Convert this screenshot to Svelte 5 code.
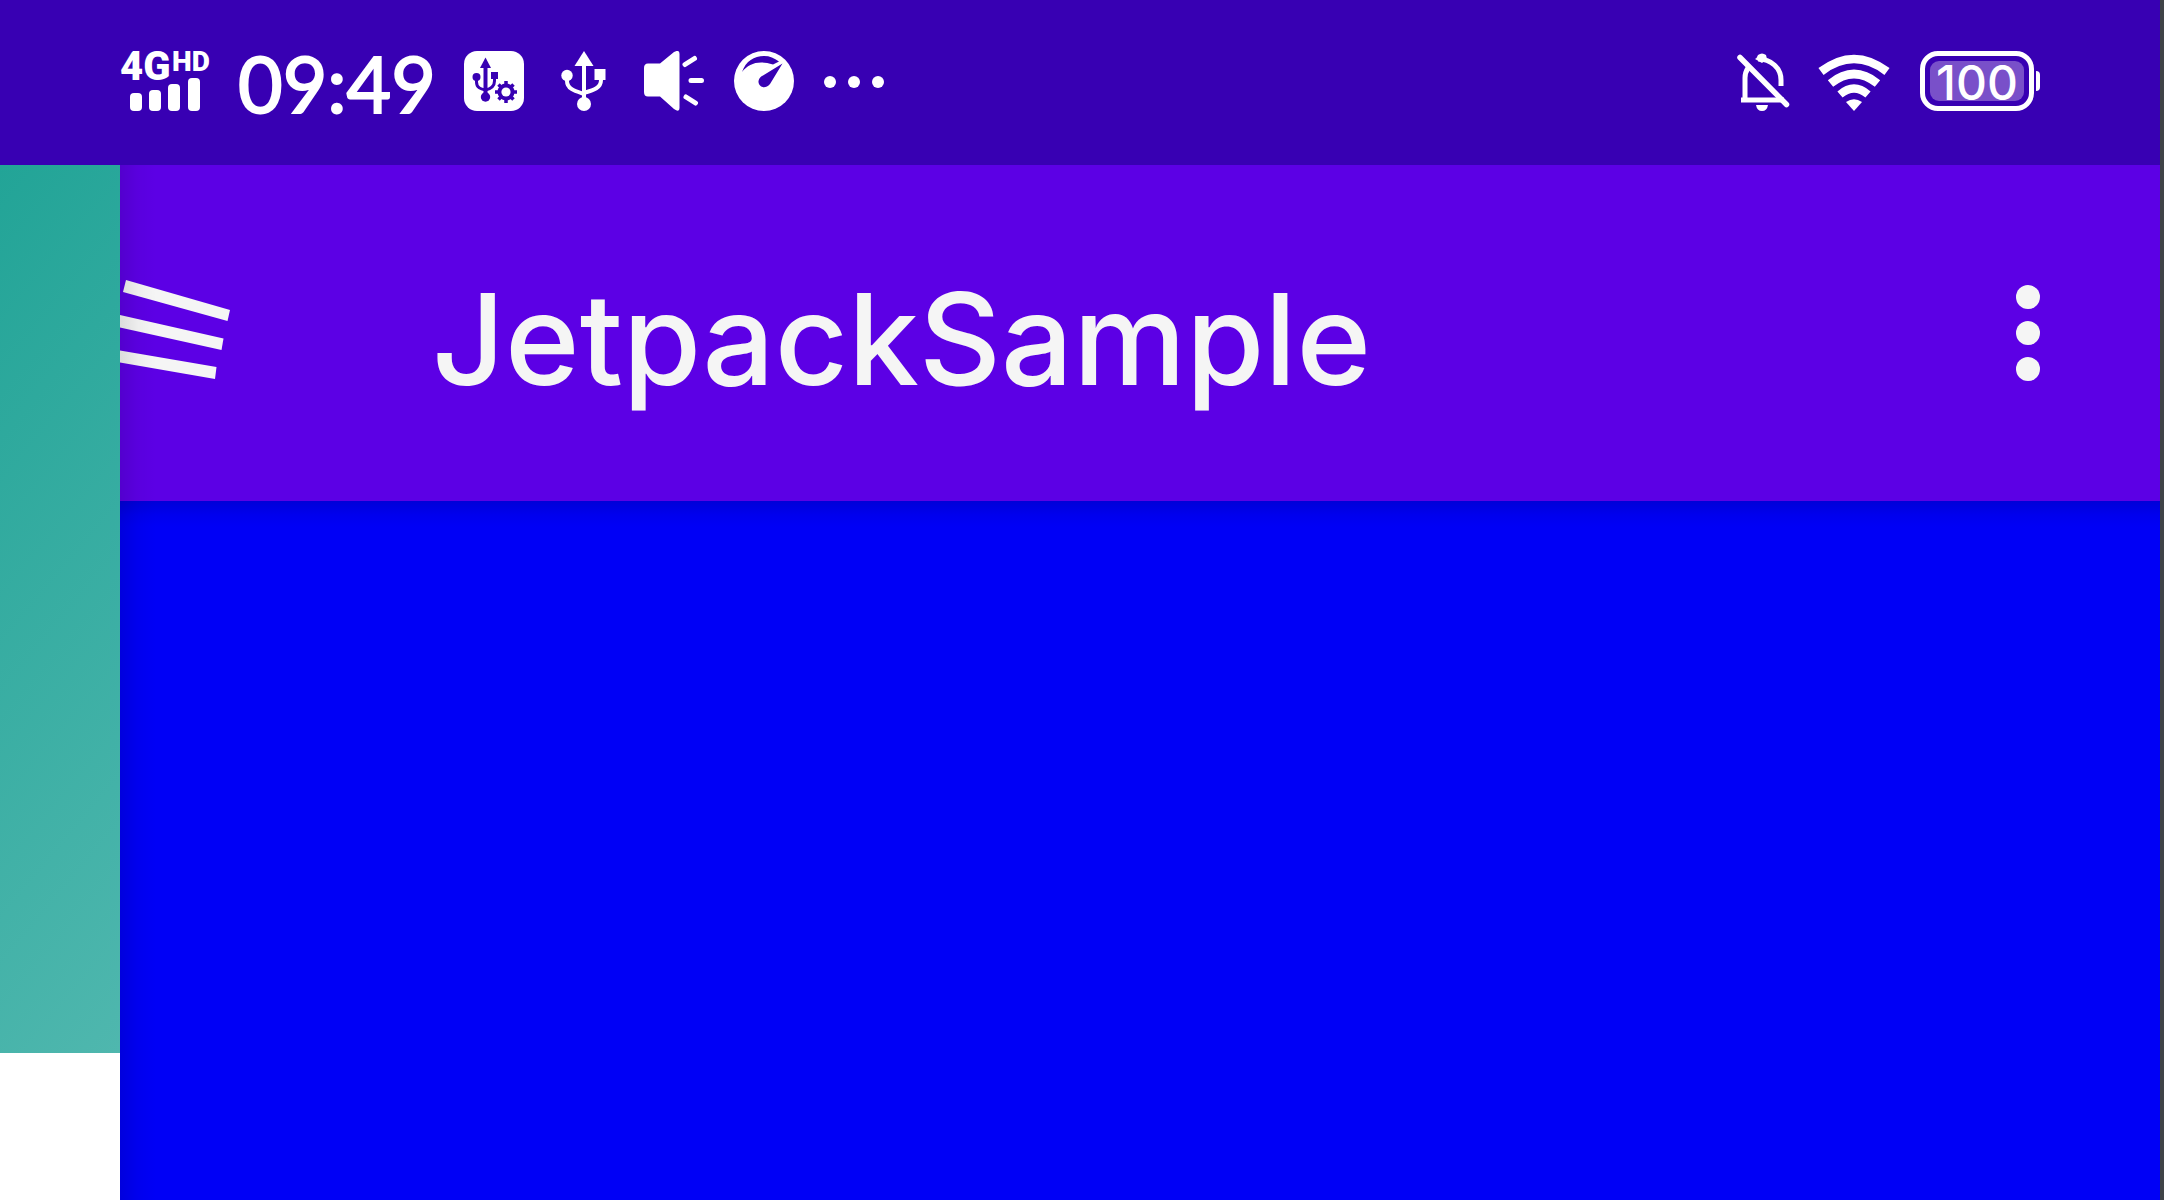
<script>
  const title = 'JetpackSample';
  const time = '09:49';
  const battery = 100;
</script>

<div class="screen">
  <header class="status">
    <div class="signal">
      <div class="network"><span class="gen">4G</span><span class="hd">HD</span></div>
      <svg class="bars" viewBox="0 0 70 33" aria-hidden="true">
        <rect x="0" y="15" width="12" height="18" rx="4" />
        <rect x="19" y="12" width="12" height="21" rx="4" />
        <rect x="38" y="6" width="12" height="27" rx="4" />
        <rect x="58" y="0" width="12" height="33" rx="4" />
      </svg>
    </div>
    <time class="clock">{time}</time>
    <div class="icons">
      <svg viewBox="0 0 60 60" aria-hidden="true">
        <rect width="60" height="60" rx="13" fill="#fff" />
        <g fill="none" stroke="#3800b3" stroke-width="4">
          <path d="M21.500 12V46" />
          <path d="M12.500 27V31C12.500 37 17 38 21.500 39C26 38 30.500 36 30.500 30V24" stroke-width="3" />
        </g>
        <g fill="#3800b3">
          <path d="M21.500 6.500L27 17H16Z" />
          <circle cx="12.500" cy="26" r="4" />
          <rect x="27" y="21" width="7" height="7" />
          <circle cx="21.500" cy="46" r="4.700" />
        </g>
        <circle cx="42" cy="41" r="8.500" fill="#3800b3" />
        <path d="M42 30V52M31 41H53M34.500 33.500L49.500 48.500M49.500 33.500L34.500 48.500" stroke="#3800b3" stroke-width="3.500" />
        <circle cx="42" cy="41" r="4.600" fill="#fff" />
      </svg>
      <svg viewBox="0 0 60 60" aria-hidden="true">
        <path d="M30 10V54M13 24V30C13 38 21 40 30 43M47 24V29C47 37 40 39 30 42" fill="none" stroke="#fff" stroke-width="4" />
        <path d="M30 0L39.500 15H20.500Z" fill="#fff" />
        <circle cx="13" cy="24.500" r="5.700" fill="#fff" />
        <rect x="40.500" y="18" width="11" height="11" fill="#fff" />
        <circle cx="30" cy="53" r="7" fill="#fff" />
      </svg>
      <svg viewBox="0 0 60 60" aria-hidden="true">
        <path d="M4 12.500H16L30 1Q35.500 -2 35.500 3V57Q35.500 62 30 58L16 45.500H4Q0 45.500 0 41V17Q0 12.500 4 12.500Z" fill="#fff" />
        <path d="M41 13.500L50.500 7.500M47 29.500H57.500M42 46L51.500 52" stroke="#fff" stroke-width="5" stroke-linecap="round" />
      </svg>
      <svg viewBox="0 0 60 60" aria-hidden="true">
        <circle cx="30" cy="30" r="30" fill="#fff" />
        <path d="M8 21C12 10 20 5 30 5C36 5 40 7 45 10.500L39 13.500C25 9 15 12 8 21Z" fill="#3800b3" />
        <path d="M48.500 12.500L36 33C31 39 24 36 24.500 30C25 27 27 25.500 29 24.500Z" fill="#3800b3" />
      </svg>
      <svg viewBox="0 0 60 60" aria-hidden="true" fill="#fff">
        <circle cx="6" cy="31" r="6" /><circle cx="30" cy="31" r="6" /><circle cx="54" cy="31" r="6" />
      </svg>
    </div>
    <div class="system">
      <svg class="bell" viewBox="0 0 60 60" aria-hidden="true">
        <path d="M7 49H50M11 49V27C11 23 12 20 14 17M24 8C37 8 47 17 47 29V35" fill="none" stroke="#fff" stroke-width="5" />
        <path d="M21 8Q23 7 24 4Q28 1 32 4L33 8L28 12Z" fill="#fff" />
        <path d="M6 6.500L52.500 53.500" stroke="#fff" stroke-width="5.500" stroke-linecap="round" />
        <path d="M22 54H34Q33 60 28 60Q23 60 22 54Z" fill="#fff" />
      </svg>
      <svg class="wifi" viewBox="0 0 72 60" aria-hidden="true">
        <g fill="none" stroke="#fff" stroke-width="8.500">
          <path d="M3 20.500Q36 -4.500 69 20.500" />
          <path d="M12.500 32.500Q36 13.500 59.500 32.500" />
          <path d="M22 43.500Q36 31.500 50 43.500" stroke-width="8" />
        </g>
        <path d="M28 51Q36 45.500 44 51L36 60Z" fill="#fff" />
      </svg>
      <div class="battery"><span class="shell"><span class="level">{battery}</span></span><span class="nub"></span></div>
    </div>
  </header>

  <div class="body">
    <aside><div class="drawer-header"></div></aside>
    <main>
      <div class="toolbar">
        <button class="menu" aria-label="Open navigation drawer">
          <svg viewBox="0 0 112 102" aria-hidden="true" fill="#f5f5f5">
            <path d="M6 0L110 30L107.500 41L3 12Z" />
            <path d="M0 35L103.500 58.500L101.500 70L0 47.500Z" />
            <path d="M0 70.500L96.500 87L95 99L0 82.500Z" />
          </svg>
        </button>
        <h1>{title}</h1>
        <button class="more" aria-label="More options"><i></i><i></i><i></i></button>
      </div>
      <div class="content"></div>
    </main>
  </div>
</div>

<style>
  :global(body) { margin: 0; }
  .screen {
    min-height: 100vh;
    display: flex;
    flex-direction: column;
    box-sizing: border-box;
    border-right: 4px solid #3f4347;
    background: #fff;
    font-family: Inter, Roboto, sans-serif;
  }
  .status {
    display: flex;
    align-items: flex-start;
    height: 165px;
    box-sizing: border-box;
    padding: 51px 120px 0;
    background: #3800b3;
    color: #fff;
  }
  svg { display: block; width: 60px; height: 60px; flex: none; }
  .signal { width: 118px; }
  .network { display: flex; height: 27px; font-family: Roboto, sans-serif; font-weight: 900; }
  .gen { font-size: 40px; line-height: 32px; width: 52px; }
  .hd { font-size: 28px; line-height: 22px; }
  .signal .bars { width: 70px; height: 33px; margin-left: 10px; fill: #fff; }
  .clock {
    width: 226px;
    font-family: Lato, Roboto, sans-serif;
    font-size: 77px;
    line-height: 64px;
    -webkit-text-stroke: 2px #fff;
    white-space: nowrap;
  }
  .icons { display: flex; gap: 30px; }
  .system { display: flex; margin-left: auto; }
  .system .wifi { width: 72px; margin: 0 30px 0 24px; }
  .battery { display: flex; align-items: center; gap: 2px; }
  .shell {
    box-sizing: border-box;
    width: 114px;
    height: 60px;
    padding: 5px;
    border: 5px solid #fff;
    border-radius: 18px;
  }
  .level {
    display: block;
    height: 40px;
    border-radius: 9px;
    background: #7950c9;
    text-align: center;
    font-size: 48px;
    line-height: 44px;
    font-weight: 500;
  }
  .nub { width: 4px; height: 20px; background: #fff; border-radius: 0 4px 4px 0; }
  .body { flex: 1; display: flex; }
  aside { width: 120px; background: #fff; }
  .drawer-header { height: 888px; background: linear-gradient(130deg, #22a497, #4fb7ae); }
  main { flex: 1; position: relative; display: flex; flex-direction: column; background: #0000f6; }
  main::after {
    content: '';
    position: absolute;
    inset: 0 auto 0 0;
    width: 36px;
    background: linear-gradient(90deg, rgba(0, 0, 0, 0.1), rgba(0, 0, 0, 0.03) 50%, transparent);
    pointer-events: none;
  }
  .toolbar { display: flex; align-items: center; height: 336px; background: #5c00e5; color: #f5f5f5; }
  button { padding: 0; border: 0; background: none; color: inherit; cursor: pointer; }
  .menu svg { width: 112px; height: 102px; }
  .menu { margin-right: 200px; padding-bottom: 4px; }
  h1 { margin: 0; padding-top: 12px; font-size: 127px; line-height: 152px; font-weight: 450; }
  .more { display: flex; flex-direction: column; gap: 12px; margin: 0 120px 0 auto; }
  .more i { width: 24px; height: 24px; border-radius: 50%; background: #f5f5f5; }
  .content { flex: 1; background: linear-gradient(#0000d8, #0000ee 14px, #0000f6 26px); }
</style>
